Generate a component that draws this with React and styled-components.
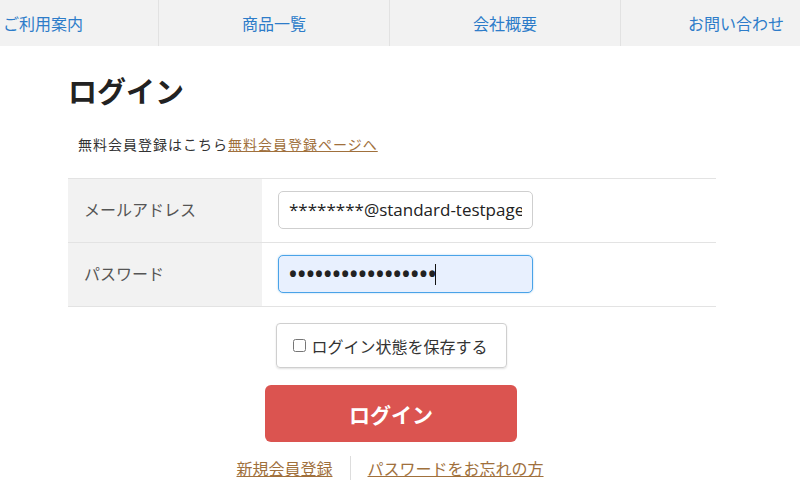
import React from "react";
import styled, { createGlobalStyle } from "styled-components";

const Global = createGlobalStyle`
  body {
    margin: 0;
    background: #fff;
    font-family: "Noto Sans CJK JP", "Noto Sans", sans-serif;
    color: #333;
  }
`;

const Page = styled.div`
  width: 800px;
  height: 500px;
  overflow: hidden;
`;

const Nav = styled.ul`
  display: flex;
  list-style: none;
  margin: 0 0 0 -72px;
  padding: 0;
  width: 924px;
  background: #f2f2f2;
`;

const NavItem = styled.li`
  width: 230px;
  height: 46px;
  line-height: 46px;
  text-align: center;
  font-size: 16px;
  color: #2d7cc9;
  border-left: ${(p) => (p.$first ? "none" : "1px solid #e2e2e2")};
`;

const Main = styled.main`
  margin-left: 68px;
  width: 648px;
`;

const Title = styled.h1`
  margin: 24px 0 0;
  font-size: 29px;
  line-height: 40px;
  font-weight: 700;
  color: #222;
`;

const Lead = styled.p`
  margin: 24px 0 0;
  padding-left: 10px;
  font-size: 14px;
  letter-spacing: 1px;
  line-height: 20px;
  color: #333;
`;

const Link = styled.a`
  color: #a0703c;
  text-decoration: underline;
  cursor: pointer;
`;

const Table = styled.div`
  margin-top: 24px;
  border-bottom: 1px solid #e3e3e3;
`;

const Row = styled.div`
  display: flex;
  height: 63px;
  border-top: 1px solid #e3e3e3;
`;

const Label = styled.div`
  width: 194px;
  padding: 0 0 4px 16px;
  box-sizing: border-box;
  display: flex;
  align-items: center;
  background: #f2f2f2;
  font-size: 16px;
  color: #555;
`;

const Cell = styled.div`
  flex: 1;
  display: flex;
  align-items: center;
  padding-left: 16px;
`;

const Field = styled.div`
  position: relative;
  margin-top: -2px;
`;

const Input = styled.input`
  display: block;
  width: 255px;
  height: 38px;
  box-sizing: border-box;
  padding: 0 10px;
  border-radius: 5px;
  font-size: ${(p) => (p.$secret ? "21px" : "17px")};
  font-weight: ${(p) => (p.$secret ? 700 : 400)};
  font-family: "Open Sans", "Liberation Sans", sans-serif;
  color: #222;
  outline: none;
  border: 1px solid ${(p) => (p.$active ? "#4aa3e8" : "#cfcfcf")};
  background: ${(p) => (p.$active ? "#e8f0fe" : "#fff")};
  box-shadow: ${(p) => (p.$active ? "0 0 2px rgba(74,163,232,0.5)" : "none")};
  letter-spacing: ${(p) => (p.$secret ? "0.8px" : "0")};
`;

const Caret = styled.span`
  position: absolute;
  left: 157px;
  top: 9px;
  width: 1px;
  height: 21px;
  background: #111;
`;

const Actions = styled.div`
  display: flex;
  flex-direction: column;
  align-items: center;
  margin-left: -2px;
`;

const Remember = styled.label`
  margin-top: 16px;
  width: 231px;
  height: 45px;
  box-sizing: border-box;
  display: flex;
  align-items: center;
  padding-left: 16px;
  gap: 6px;
  border: 1px solid #cfcfcf;
  border-radius: 4px;
  box-shadow: 0 1px 2px rgba(0, 0, 0, 0.12);
  font-size: 16px;
  color: #333;
`;

const Check = styled.input`
  width: 13px;
  height: 13px;
  margin: 0;
`;

const Submit = styled.button`
  margin-top: 17px;
  width: 252px;
  height: 57px;
  border: none;
  border-radius: 6px;
  background: #db5450;
  color: #fff;
  font-family: "Noto Sans CJK JP", sans-serif;
  font-size: 21px;
  font-weight: 700;
`;

const Footer = styled.div`
  margin-top: 14px;
  display: flex;
  align-items: center;
  font-size: 16px;
  line-height: 22px;
  margin-left: -2px;
`;

const Divider = styled.span`
  width: 1px;
  height: 24px;
  margin: 0 17px;
  background: #ddd;
`;

const menu = ["ご利用案内", "商品一覧", "会社概要", "お問い合わせ"];

export default function App() {
  return (
    <Page>
      <Global />
      <Nav>
        {menu.map((m, i) => (
          <NavItem key={m} $first={i === 0}>
            {m}
          </NavItem>
        ))}
      </Nav>
      <Main>
        <Title>ログイン</Title>
        <Lead>
          無料会員登録はこちら<Link>無料会員登録ページへ</Link>
        </Lead>
        <Table>
          <Row>
            <Label>メールアドレス</Label>
            <Cell>
              <Field>
                <Input type="text" readOnly value="********@standard-testpage.com" />
              </Field>
            </Cell>
          </Row>
          <Row>
            <Label>パスワード</Label>
            <Cell>
              <Field>
                <Input type="password" readOnly $active $secret value="abcdefghijklmnopq" />
                <Caret />
              </Field>
            </Cell>
          </Row>
        </Table>
        <Actions>
          <Remember>
            <Check type="checkbox" />
            ログイン状態を保存する
          </Remember>
          <Submit>ログイン</Submit>
          <Footer>
            <Link>新規会員登録</Link>
            <Divider />
            <Link>パスワードをお忘れの方</Link>
          </Footer>
        </Actions>
      </Main>
    </Page>
  );
}
